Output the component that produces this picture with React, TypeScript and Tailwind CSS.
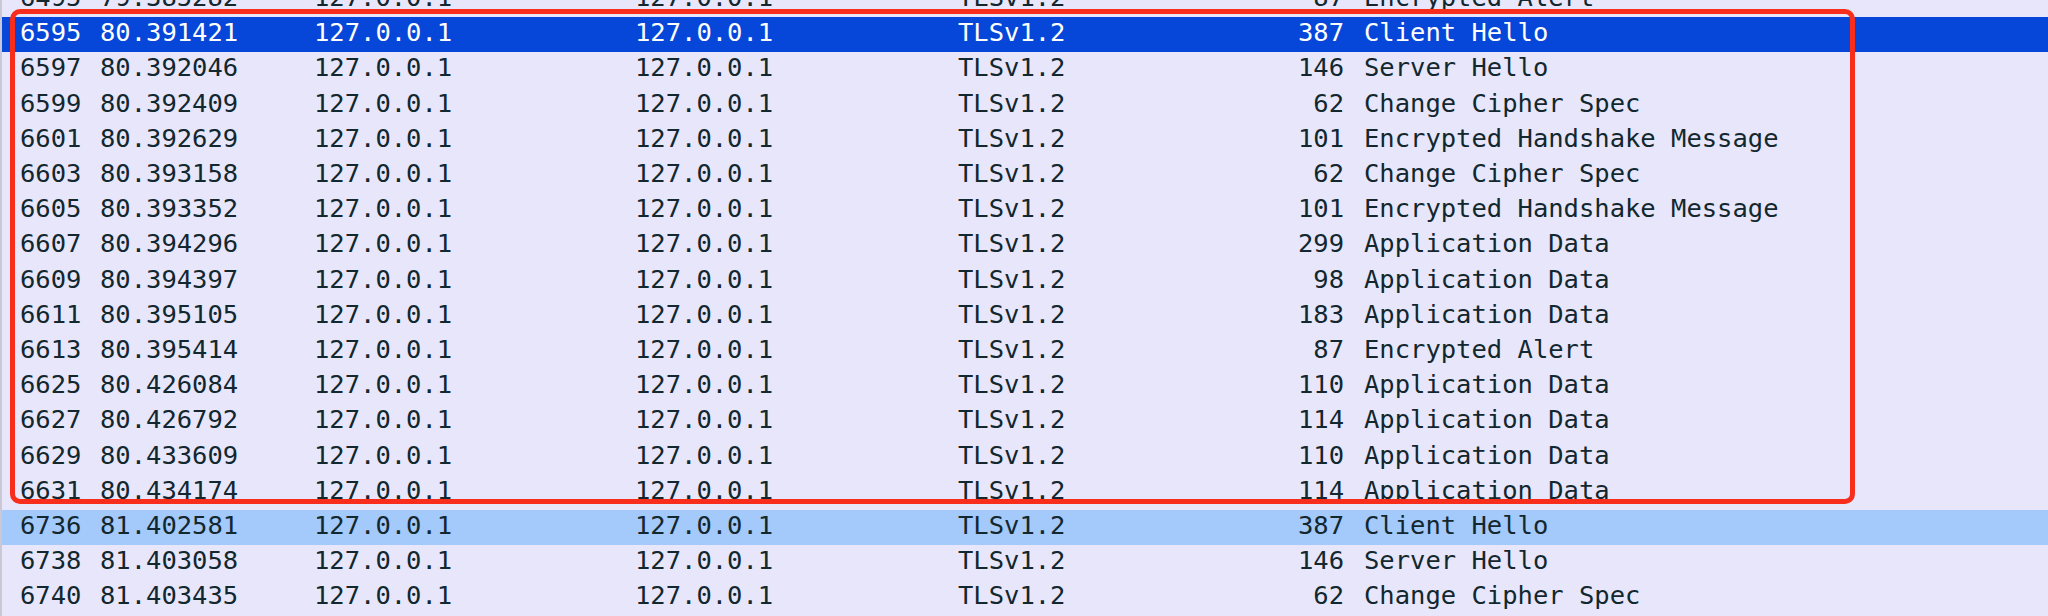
type Packet = {
  no: string;
  time: string;
  len: string;
  info: string;
  tone?: "selected" | "related";
};

const packets: Packet[] = [
  { no: "6495", time: "79.385282", len: "87", info: "Encrypted Alert" },
  { no: "6595", time: "80.391421", len: "387", info: "Client Hello", tone: "selected" },
  { no: "6597", time: "80.392046", len: "146", info: "Server Hello" },
  { no: "6599", time: "80.392409", len: "62", info: "Change Cipher Spec" },
  { no: "6601", time: "80.392629", len: "101", info: "Encrypted Handshake Message" },
  { no: "6603", time: "80.393158", len: "62", info: "Change Cipher Spec" },
  { no: "6605", time: "80.393352", len: "101", info: "Encrypted Handshake Message" },
  { no: "6607", time: "80.394296", len: "299", info: "Application Data" },
  { no: "6609", time: "80.394397", len: "98", info: "Application Data" },
  { no: "6611", time: "80.395105", len: "183", info: "Application Data" },
  { no: "6613", time: "80.395414", len: "87", info: "Encrypted Alert" },
  { no: "6625", time: "80.426084", len: "110", info: "Application Data" },
  { no: "6627", time: "80.426792", len: "114", info: "Application Data" },
  { no: "6629", time: "80.433609", len: "110", info: "Application Data" },
  { no: "6631", time: "80.434174", len: "114", info: "Application Data" },
  { no: "6736", time: "81.402581", len: "387", info: "Client Hello", tone: "related" },
  { no: "6738", time: "81.403058", len: "146", info: "Server Hello" },
  { no: "6740", time: "81.403435", len: "62", info: "Change Cipher Spec" },
];

const Row = ({ p }: { p: Packet }) => {
  const bg =
    p.tone === "selected"
      ? "bg-[#0647d9] text-white"
      : p.tone === "related"
      ? "bg-[#a4c9fb] text-[#12272e]"
      : "text-[#12272e]";

  return (
    <div className={`flex h-[35.2px] leading-[30px] whitespace-pre ${bg}`}>
      <span className="w-[18px] shrink-0" />
      <span className="w-[80px] shrink-0">{p.no}</span>
      <span className="w-[214px] shrink-0">{p.time}</span>
      <span className="w-[321px] shrink-0">127.0.0.1</span>
      <span className="w-[323px] shrink-0">127.0.0.1</span>
      <span className="w-[300px] shrink-0">TLSv1.2</span>
      <span className="w-[86px] shrink-0 text-right">{p.len}</span>
      <span className="pl-[20px]">{p.info}</span>
    </div>
  );
};

export default function App() {
  return (
    <div className="relative w-[2048px] h-[616px] overflow-hidden bg-[#e7e6fb] border-l-2 border-[#c9c8d4] font-['DejaVu_Sans_Mono',monospace] text-[25.5px]">
      <div className="-mt-[17.9px]">
        {packets.map((p) => (
          <Row key={p.no} p={p} />
        ))}
      </div>

      {/* annotation box */}
      <div className="absolute left-[8px] top-[9px] w-[1845px] h-[495px] border-[5px] border-[#f92d1b] rounded-[10px]" />
    </div>
  );
}
